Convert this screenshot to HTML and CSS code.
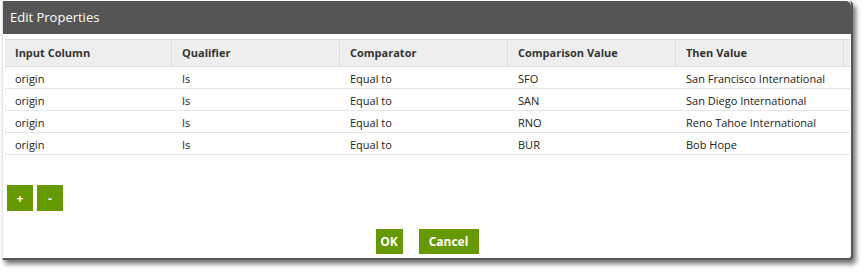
FILE: index.html
```html
<!DOCTYPE html>
<html>
<head>
<meta charset="utf-8">
<link rel="stylesheet" href="styles.css">
</head>
<body>
<div class="dialog">
  <div class="titlebar">Edit Properties</div>
  <div class="table">
    <div class="row head">
      <div class="cell">Input Column</div>
      <div class="cell">Qualifier</div>
      <div class="cell">Comparator</div>
      <div class="cell">Comparison Value</div>
      <div class="cell">Then Value</div>
      <div class="cell"></div>
    </div>
    <div class="row">
      <div class="cell">origin</div><div class="cell">Is</div><div class="cell">Equal to</div><div class="cell">SFO</div><div class="cell">San Francisco International</div><div class="cell"></div>
    </div>
    <div class="row">
      <div class="cell">origin</div><div class="cell">Is</div><div class="cell">Equal to</div><div class="cell">SAN</div><div class="cell">San Diego International</div><div class="cell"></div>
    </div>
    <div class="row">
      <div class="cell">origin</div><div class="cell">Is</div><div class="cell">Equal to</div><div class="cell">RNO</div><div class="cell">Reno Tahoe International</div><div class="cell"></div>
    </div>
    <div class="row">
      <div class="cell">origin</div><div class="cell">Is</div><div class="cell">Equal to</div><div class="cell">BUR</div><div class="cell">Bob Hope</div><div class="cell"></div>
    </div>
  </div>
  <div class="rowtools">
    <button class="btn sq">+</button>
    <button class="btn sq">-</button>
  </div>
  <div class="actions">
    <button class="btn ok">OK</button>
    <button class="btn cancel">Cancel</button>
  </div>
</div>
</body>
</html>
```
FILE: styles.css
```css
html, body {
  margin: 0;
  padding: 0;
  background: #fff;
}
body {
  font-family: "Open Sans", "Noto Sans", sans-serif;
  width: 866px;
  height: 274px;
  overflow: hidden;
}
.dialog {
  width: 851px;
  height: 259px;
  margin: 1px 0 0 2px;
  background: #fff;
  border-right: 2px solid #555;
  border-bottom: 2px solid #555;
  border-left: 1px solid #e4e4e4;
  border-radius: 0 4px 4px 0;
  box-shadow: 3px 4px 5px rgba(0,0,0,0.55);
  display: flex;
  flex-direction: column;
  box-sizing: border-box;
}
.titlebar {
  height: 33px;
  background: #555;
  color: #fff;
  font-size: 13px;
  line-height: 33px;
  padding-left: 7px;
  border-radius: 0 5px 0 0;
}
.table {
  margin: 5px 0 0 2px;
  width: 845px;
  font-size: 11px;
  color: #222;
}
.row {
  display: grid;
  grid-template-columns: 167px 168px 168px 168px 168px 1fr;
  height: 22px;
  border-bottom: 1px solid #e6e6e6;
  box-sizing: border-box;
  align-items: center;
}
.row .cell {
  padding-left: 10px;
  padding-top: 1px;
  white-space: nowrap;
  line-height: 21px;
}
.row.head {
  height: 28px;
  background: #eee;
  border-top: 1px solid #ddd;
  border-bottom: 1px solid #ddd;
  font-weight: bold;
  color: #333;
  align-items: stretch;
}
.row.head .cell {
  line-height: 26px;
  padding-top: 0;
  border-right: 1px solid #ddd;
}
.row.head .cell:last-child {
  border-right: none;
}
.btn {
  background: #669900;
  color: #fff;
  border: none;
  font-family: "Open Sans", "Noto Sans", sans-serif;
  font-weight: bold;
  padding: 0;
  margin: 0;
  cursor: pointer;
}
.rowtools {
  display: flex;
  gap: 4px;
  margin: 30px 0 0 4px;
}
.sq {
  width: 26px;
  height: 26px;
  font-size: 12px;
}
.actions {
  display: flex;
  justify-content: center;
  gap: 16px;
  margin-top: 18px;
}
.ok, .cancel {
  height: 25px;
  font-size: 12px;
}
.ok { width: 27px; }
.cancel { width: 60px; }
```
